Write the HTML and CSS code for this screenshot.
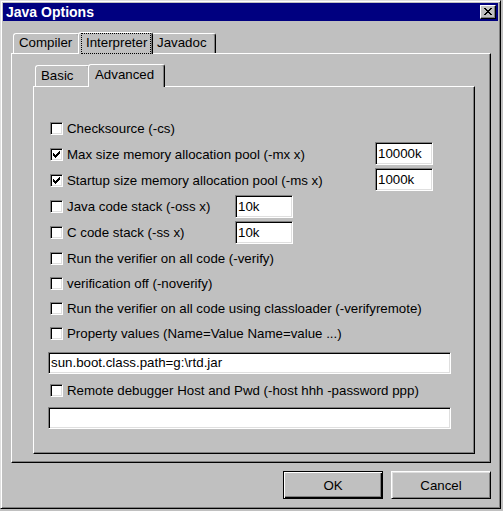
FILE: index.html
```html
<!DOCTYPE html>
<html>
<head>
<meta charset="utf-8">
<title>Java Options</title>
<link rel="stylesheet" href="styles.css">
</head>
<body>
<div class="window">
  <div class="titlebar">
    <span class="title">Java Options</span>
    <span class="close">
      <svg width="8" height="7" viewBox="0 0 8 7" shape-rendering="crispEdges">
        <rect x="0" y="0" width="2" height="1"/><rect x="6" y="0" width="2" height="1"/>
        <rect x="1" y="1" width="2" height="1"/><rect x="5" y="1" width="2" height="1"/>
        <rect x="2" y="2" width="4" height="1"/>
        <rect x="3" y="3" width="2" height="1"/>
        <rect x="2" y="4" width="4" height="1"/>
        <rect x="1" y="5" width="2" height="1"/><rect x="5" y="5" width="2" height="1"/>
        <rect x="0" y="6" width="2" height="1"/><rect x="6" y="6" width="2" height="1"/>
      </svg>
    </span>
  </div>
  <div class="client">
    <div class="tabs outer-tabs">
      <div class="tab w-compiler">Compiler</div>
      <div class="tab tab-sel w-interp"><span class="focus">Interpreter</span></div>
      <div class="tab w-javadoc">Javadoc</div>
    </div>
    <div class="panel outer-panel">
      <div class="tabs inner-tabs">
        <div class="tab w-basic">Basic</div>
        <div class="tab tab-sel w-adv">Advanced</div>
      </div>
      <div class="panel inner-panel">
        <div class="row">
          <span class="cb"></span><span class="lbl">Checksource (-cs)</span>
        </div>
        <div class="row">
          <span class="cb"><svg class="chk" width="7" height="7" viewBox="0 0 7 7" shape-rendering="crispEdges"><rect x="6" y="0" width="1" height="1"/><rect x="5" y="1" width="2" height="1"/><rect x="0" y="2" width="1" height="1"/><rect x="4" y="2" width="3" height="1"/><rect x="0" y="3" width="2" height="1"/><rect x="3" y="3" width="3" height="1"/><rect x="0" y="4" width="5" height="1"/><rect x="1" y="5" width="3" height="1"/><rect x="2" y="6" width="1" height="1"/></svg></span>
          <span class="lbl lbl-a">Max size memory allocation pool (-mx x)</span>
          <span class="edit edit-sm edit-up">10000k</span>
        </div>
        <div class="row">
          <span class="cb"><svg class="chk" width="7" height="7" viewBox="0 0 7 7" shape-rendering="crispEdges"><rect x="6" y="0" width="1" height="1"/><rect x="5" y="1" width="2" height="1"/><rect x="0" y="2" width="1" height="1"/><rect x="4" y="2" width="3" height="1"/><rect x="0" y="3" width="2" height="1"/><rect x="3" y="3" width="3" height="1"/><rect x="0" y="4" width="5" height="1"/><rect x="1" y="5" width="3" height="1"/><rect x="2" y="6" width="1" height="1"/></svg></span>
          <span class="lbl lbl-a">Startup size memory allocation pool (-ms x)</span>
          <span class="edit edit-sm edit-up">1000k</span>
        </div>
        <div class="row">
          <span class="cb"></span>
          <span class="lbl lbl-b">Java code stack (-oss x)</span>
          <span class="edit edit-sm">10k</span>
        </div>
        <div class="row">
          <span class="cb"></span>
          <span class="lbl lbl-b">C code stack (-ss x)</span>
          <span class="edit edit-sm">10k</span>
        </div>
        <div class="row">
          <span class="cb"></span><span class="lbl">Run the verifier on all code (-verify)</span>
        </div>
        <div class="row r25">
          <span class="cb"></span><span class="lbl">verification off (-noverify)</span>
        </div>
        <div class="row r25">
          <span class="cb"></span><span class="lbl">Run the verifier on all code using classloader (-verifyremote)</span>
        </div>
        <div class="row r25">
          <span class="cb"></span><span class="lbl">Property values (Name=Value Name=value ...)</span>
        </div>
        <div class="edit edit-wide edit-prop">sun.boot.class.path=g:\rtd.jar</div>
        <div class="row row-remote">
          <span class="cb"></span><span class="lbl">Remote debugger Host and Pwd (-host hhh -password ppp)</span>
        </div>
        <div class="edit edit-wide edit-remote"></div>
      </div>
    </div>
    <div class="buttons">
      <button class="btn btn-default">OK</button>
      <button class="btn">Cancel</button>
    </div>
  </div>
</div>
</body>
</html>
```

FILE: styles.css
```css
html, body {
  margin: 0;
  padding: 0;
  background: #c0c0c0;
}

body {
  font-family: "Liberation Sans", Arial, sans-serif;
  font-size: 13.3px;
  color: #000;
}

.window {
  box-sizing: border-box;
  width: 501px;
  height: 509px;
  background: #c0c0c0;
  border: 1px solid;
  border-color: #dfdfdf #000 #000 #dfdfdf;
  box-shadow: inset 1px 1px #fff, inset -1px -1px #808080;
  padding: 2px;
  display: flex;
  flex-direction: column;
}

.titlebar {
  height: 18px;
  background: #000080;
  color: #fff;
  display: flex;
  align-items: center;
  justify-content: space-between;
  padding-left: 3px;
}

.title {
  font-weight: bold;
  font-size: 14px;
  line-height: 18px;
}

.close {
  box-sizing: border-box;
  width: 16px;
  height: 14px;
  margin-right: 2px;
  background: #c0c0c0;
  border: 1px solid;
  border-color: #fff #000 #000 #fff;
  box-shadow: inset -1px -1px #808080;
  display: flex;
  align-items: center;
  justify-content: center;
  padding: 0 1px 1px 0;
}

.close svg {
  display: block;
  fill: #000;
}

.client {
  padding: 10px 7px 0 8px;
  display: flex;
  flex-direction: column;
}

.tabs {
  display: flex;
  align-items: flex-end;
  padding-left: 2px;
}

.outer-tabs { height: 22px; }
.inner-tabs { height: 23px; }

.tab {
  box-sizing: border-box;
  flex: none;
  background: #c0c0c0;
  border: 1px solid;
  border-bottom: none;
  border-color: #fff #000 transparent #fff;
  box-shadow: inset -1px 0 #808080;
  border-radius: 3px 3px 0 0;
  padding-left: 5px;
  line-height: 16px;
  white-space: nowrap;
}

.outer-tabs .tab {
  height: 20px;
  padding-top: 1px;
}

.inner-tabs .tab {
  height: 21px;
  padding-top: 2px;
}

.outer-tabs .tab-sel {
  height: 22px;
  padding: 0 1px;
}

.inner-tabs .tab-sel {
  height: 23px;
  padding-left: 6px;
}

.tab-sel {
  position: relative;
  z-index: 1;
  margin: 0 -2px -1px -2px;
}

.focus {
  display: block;
  box-sizing: border-box;
  height: 21px;
  margin-left: 1px;
  border: 1px dotted #000;
  padding-left: 4px;
  line-height: 18px;
}

.w-compiler { width: 67px; }
.w-interp { width: 75px; }
.w-javadoc { width: 65px; }
.w-basic { width: 55px; }
.w-adv { width: 77px; }

.panel {
  box-sizing: border-box;
  background: #c0c0c0;
  border: 1px solid;
  border-color: #fff #000 #000 #fff;
  box-shadow: inset -1px -1px #808080;
}

.outer-panel {
  height: 410px;
  padding: 9px 15px 8px 21px;
  display: flex;
  flex-direction: column;
}

.inner-panel {
  height: 368px;
  padding: 28px 0 0 14px;
  display: flex;
  flex-direction: column;
}

.row {
  height: 26px;
  display: flex;
  align-items: center;
  padding-left: 2px;
  white-space: nowrap;
}

.r25 { height: 25px; }

.row-remote { margin-top: 3px; }

.cb {
  box-sizing: border-box;
  flex: none;
  width: 13px;
  height: 13px;
  background: #fff;
  border: 1px solid;
  border-color: #808080 #fff #fff #808080;
  box-shadow: inset 1px 1px #000, inset -1px -1px #dfdfdf;
  padding: 2px;
}

.chk {
  display: block;
  fill: #000;
}

.lbl {
  margin-left: 4px;
  flex: none;
}

.lbl-a { width: 308px; }
.lbl-b { width: 168px; }

.edit {
  box-sizing: border-box;
  background: #fff;
  border: 1px solid;
  border-color: #808080 #fff #fff #808080;
  box-shadow: inset 1px 1px #000, inset -1px -1px #dfdfdf;
  padding-left: 2px;
  white-space: nowrap;
}

.edit-sm {
  flex: none;
  width: 58px;
  height: 23px;
  line-height: 21px;
}

.edit-up {
  position: relative;
  top: -1px;
}

.edit-wide {
  width: 403px;
  height: 22px;
  line-height: 20px;
}

.edit-prop { margin-top: 6px; }
.edit-remote { margin-top: 4px; }

.buttons {
  margin-top: 8px;
  display: flex;
  justify-content: flex-end;
  gap: 8px;
}

.btn {
  box-sizing: border-box;
  width: 100px;
  height: 28px;
  margin: 0;
  padding: 0;
  font: inherit;
  color: #000;
  background: #c0c0c0;
  border: 1px solid;
  border-color: #fff #000 #000 #fff;
  box-shadow: inset 1px 1px #dfdfdf, inset -1px -1px #808080;
  border-radius: 0;
}

.btn-default {
  border-color: #000;
  box-shadow: inset 1px 1px #fff, inset -1px -1px #000, inset -2px -2px #808080;
}
```
